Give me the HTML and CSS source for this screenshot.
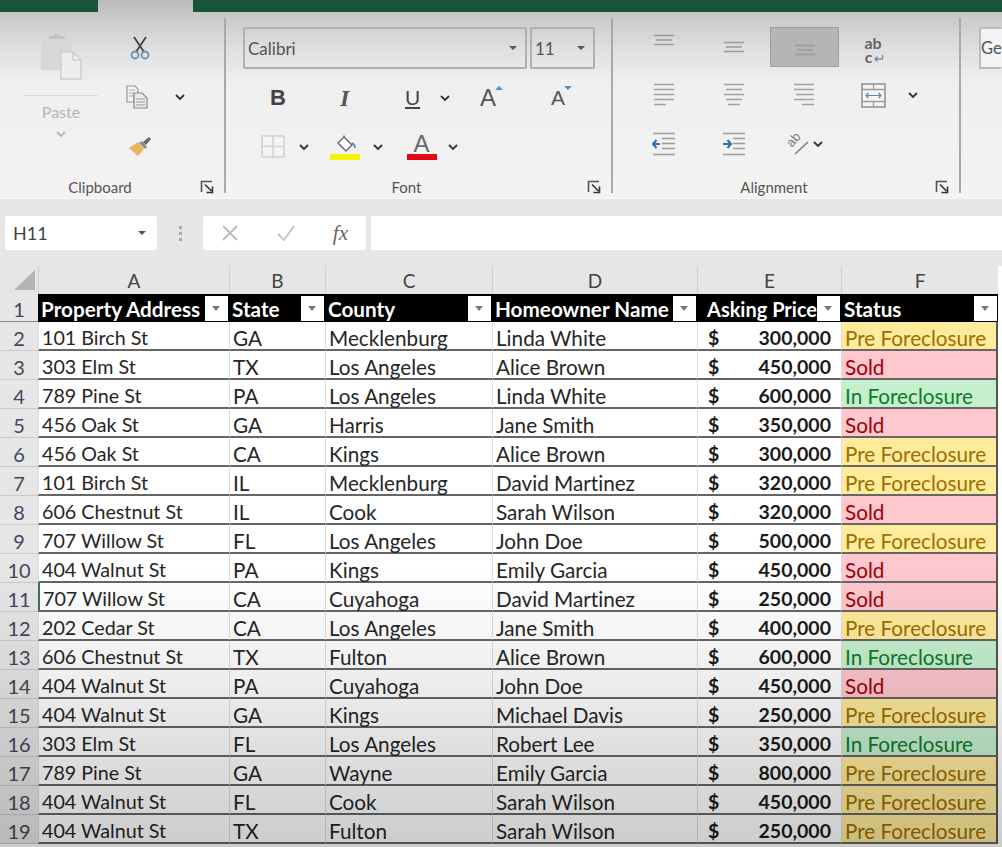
FILE: index.html
```html
<!DOCTYPE html>
<html lang="en">
<head>
<meta charset="utf-8">
<title>Property list</title>
<link rel="stylesheet" href="styles.css">
</head>
<body>
<svg class="defs" width="0" height="0" aria-hidden="true">
  <symbol id="chev" viewBox="0 0 12 8"><path d="M2 2l4 4 4-4" fill="none" stroke="#333" stroke-width="1.8"/></symbol>
  <symbol id="launch" viewBox="0 0 14 14"><path d="M1.5 12V1.5H12" fill="none" stroke="#555" stroke-width="1.6"/><path d="M5 4.5l6.5 6.5M6.500 12.500h6v-6" fill="none" stroke="#333" stroke-width="1.6"/></symbol>
  <symbol id="lines-c" viewBox="0 0 22 12"><path d="M1 1.500h20M3 6h16M1 10.500h20" stroke="#9a9a9a" stroke-width="1.600"/></symbol>
  <symbol id="l-left" viewBox="0 0 22 24"><path d="M1 1.500h20M1 6.500h20M1 11.500h20M1 16.500h20M1 21.500h12" stroke="#a2a2a2" stroke-width="1.600"/></symbol>
  <symbol id="l-center" viewBox="0 0 22 24"><path d="M1 1.500h20M3 6.500h16M1 11.500h20M3 16.500h16M5 21.500h12" stroke="#a2a2a2" stroke-width="1.600"/></symbol>
  <symbol id="l-right" viewBox="0 0 22 24"><path d="M1 1.500h20M1 6.500h20M3 11.500h18M1 16.500h20M9 21.500h12" stroke="#a2a2a2" stroke-width="1.600"/></symbol>
</svg>

<div class="titlebar"><div class="tab-gap"></div></div>

<div class="ribbon">
  <section class="group group-clip">
    <div class="group-body clip-body">
      <div class="paste">
        <svg class="ic-paste" width="42" height="47" viewBox="0 0 42 47"><path d="M1 6h31v31H1z" fill="#d8d6d9"/><path d="M9 6V3h5V1h6v2h5v3z" fill="#c6c4c8"/><path d="M21 19h12l8 8v19H21z" fill="#efedf0" stroke="#d0ced2" stroke-width="1.500"/><path d="M33 19v8h8" fill="none" stroke="#d0ced2" stroke-width="1.500"/></svg>
        <div class="paste-rule"></div>
        <div class="paste-label">Paste</div>
        <svg class="paste-chev" width="12" height="8"><use href="#chev" opacity=".3"/></svg>
      </div>
      <div class="clip-tools">
        <svg width="22" height="24" viewBox="0 0 22 24"><path d="M5 1l10 15M17 1L7 16" stroke="#444" stroke-width="1.800" fill="none"/><circle cx="6" cy="19" r="3.500" fill="none" stroke="#6d8fb0" stroke-width="1.800"/><circle cx="16" cy="19" r="3.500" fill="none" stroke="#6d8fb0" stroke-width="1.800"/></svg>
        <span></span>
        <svg class="ic-copy" width="22" height="24" viewBox="0 0 22 24"><path d="M1 1h8l3 3v5H8v8H1z" fill="#f3f2f3" stroke="#999" stroke-width="1.200"/><path d="M3 5h6M3 8h4M3 11h4" stroke="#aaa"/><path d="M8 8h8l5 5v10H8z" fill="#eceaee" stroke="#888" stroke-width="1.200"/><path d="M10 14h9M10 17h9M10 20h9" stroke="#999"/></svg>
        <svg width="12" height="8"><use href="#chev"/></svg>
        <svg width="24" height="22" viewBox="0 0 24 22"><path d="M1 13l9-6 6 7-6 7z" fill="#e6b660"/><path d="M11 8l6 6 2-2-5-6z" fill="#8b8b8b"/><path d="M15 7l6-5 2 2-5 6z" fill="#666"/></svg>
        <span></span>
      </div>
    </div>
    <div class="group-foot"><span class="group-name">Clipboard</span><svg class="launcher" width="14" height="14"><use href="#launch"/></svg></div>
  </section>

  <section class="group group-font">
    <div class="group-body">
      <div class="combos">
        <div class="combo combo-font"><span>Calibri</span><i class="caret"></i></div>
        <div class="combo combo-size"><span>11</span><i class="caret"></i></div>
      </div>
      <div class="font-row font-row-a">
        <b class="gl gl-b">B</b>
        <i class="gl gl-i">I</i>
        <u class="gl gl-u">U</u>
        <svg width="12" height="8"><use href="#chev"/></svg>
        <span class="gl gl-a gl-up">A</span>
        <span class="gl gl-a gl-down">A</span>
      </div>
      <div class="font-row font-row-b">
        <svg width="24" height="23" viewBox="0 0 24 23"><path d="M1 1h22v21H1zM12 1v21M1 11.500h22" fill="#f5f4f5" stroke="#d2d2d2" stroke-width="1.600"/></svg>
        <svg width="12" height="8"><use href="#chev"/></svg>
        <div class="swatch-ic">
          <svg width="22" height="19" viewBox="0 0 22 19"><path d="M10 3l8 8-6 6-8-8z" fill="#fbfbfb" stroke="#666" stroke-width="1.400"/><path d="M10 3V1.500M18 9c2 1 3 3 3 5" fill="none" stroke="#4d82b8" stroke-width="1.500"/></svg>
          <i class="swatch swatch-yellow"></i>
        </div>
        <svg width="12" height="8"><use href="#chev"/></svg>
        <div class="swatch-ic swatch-a">
          <span class="gl-a-color">A</span>
          <i class="swatch swatch-red"></i>
        </div>
        <svg width="12" height="8"><use href="#chev"/></svg>
      </div>
    </div>
    <div class="group-foot"><span class="group-name">Font</span><svg class="launcher" width="14" height="14"><use href="#launch"/></svg></div>
  </section>

  <section class="group group-align">
    <div class="group-body align-grid">
      <div class="acell acell-top"><svg width="22" height="12"><use href="#lines-c"/></svg></div>
      <div class="acell acell-mid"><svg width="22" height="12"><use href="#lines-c"/></svg></div>
      <div class="acell acell-bottom acell-on"><svg width="22" height="12"><use href="#lines-c"/></svg></div>
      <div class="acell acell-wrap">
        <span class="wrap-ab">ab</span>
        <span class="wrap-c">c<svg width="11" height="8" viewBox="0 0 11 8"><path d="M9.500 0v4H2M4.500 1.500L2 4l2.500 2.500" fill="none" stroke="#6d8fb0" stroke-width="1.300"/></svg></span>
      </div>
      <span></span>
      <div class="acell"><svg width="22" height="24"><use href="#l-left"/></svg></div>
      <div class="acell"><svg width="22" height="24"><use href="#l-center"/></svg></div>
      <div class="acell"><svg width="22" height="24"><use href="#l-right"/></svg></div>
      <div class="acell"><svg width="25" height="25" viewBox="0 0 25 25"><path d="M1 1h23v23H1z" fill="#f6f5f6" stroke="#8f8f8f" stroke-width="1.500"/><path d="M1 6.500h23M1 18.500h23M12.500 1v5.500M12.500 18.500V24" stroke="#9a9a9a" stroke-width="1.300"/><path d="M5 12.500h15M7.500 10l-2.500 2.500 2.500 2.500M17.500 10l2.500 2.500-2.500 2.500" fill="none" stroke="#5a86ad" stroke-width="1.200"/></svg></div>
      <svg width="12" height="8"><use href="#chev"/></svg>
      <div class="acell"><svg width="24" height="24" viewBox="0 0 24 24"><path d="M1 1.500h22M10 6.500h13M10 11.500h13M10 16.500h13M1 22.500h22" stroke="#9c9c9c" stroke-width="1.600"/><path d="M1 12h7M4.500 8L1 12l3.500 4" fill="none" stroke="#2f73b5" stroke-width="2.200"/></svg></div>
      <div class="acell"><svg width="24" height="24" viewBox="0 0 24 24"><path d="M1 1.500h22M11 6.500h12M11 11.500h12M11 16.500h12M1 22.500h22" stroke="#9c9c9c" stroke-width="1.600"/><path d="M1 12h8M5.500 8L9 12l-3.500 4" fill="none" stroke="#2f73b5" stroke-width="2.200"/></svg></div>
      <div class="acell acell-orient">
        <svg class="ic-orient" width="22" height="22" viewBox="0 0 22 22"><path d="M8 21L21 9" stroke="#777" stroke-width="1.400"/><text class="orient-text" x="0" y="0" transform="translate(5 15) rotate(-50)">ab</text></svg>
        <svg width="12" height="8"><use href="#chev"/></svg>
      </div>
    </div>
    <div class="group-foot"><span class="group-name">Alignment</span><svg class="launcher" width="14" height="14"><use href="#launch"/></svg></div>
  </section>

  <section class="group-number">
    <div class="combo combo-number"><span>Ge</span></div>
  </section>
</div>

<div class="formula-bar">
  <div class="name-box"><span>H11</span><i class="caret"></i></div>
  <div class="grip"><i></i><i></i><i></i></div>
  <div class="fx-box">
    <svg width="18" height="18" viewBox="0 0 18 18"><path d="M2 2l14 14M16 2L2 16" stroke="#bbb" stroke-width="1.800"/></svg>
    <svg width="20" height="18" viewBox="0 0 20 18"><path d="M2 10l6 6L18 2" fill="none" stroke="#c6c6c6" stroke-width="2"/></svg>
    <span class="fx">fx</span>
  </div>
  <div class="fx-input"></div>
</div>

<div class="sheet">
<table class="grid">
  <colgroup>
    <col class="c0"><col class="ca"><col class="cb"><col class="cc"><col class="cd"><col class="ce"><col class="cf">
  </colgroup>
  <thead>
    <tr class="col-heads">
      <th class="corner"><i class="corner-mark"></i></th>
      <th>A</th><th>B</th><th>C</th><th>D</th><th>E</th><th>F</th>
    </tr>
  </thead>
  <tbody>
    <tr class="head-row">
      <th class="rn">1</th>
      <td><div class="hd"><span>Property Address</span><i class="flt"></i></div></td>
      <td><div class="hd"><span>State</span><i class="flt"></i></div></td>
      <td><div class="hd"><span>County</span><i class="flt"></i></div></td>
      <td><div class="hd"><span>Homeowner Name</span><i class="flt"></i></div></td>
      <td><div class="hd hd-e"><span>Asking Price</span><i class="flt"></i></div></td>
      <td><div class="hd"><span>Status</span><i class="flt"></i></div></td>
    </tr>
    <tr><th class="rn">2</th><td>101 Birch St</td><td>GA</td><td>Mecklenburg</td><td>Linda White</td><td class="money"><div><span>$</span><span>300,000</span></div></td><td class="pre">Pre Foreclosure</td></tr>
    <tr><th class="rn">3</th><td>303 Elm St</td><td>TX</td><td>Los Angeles</td><td>Alice Brown</td><td class="money"><div><span>$</span><span>450,000</span></div></td><td class="sold">Sold</td></tr>
    <tr><th class="rn">4</th><td>789 Pine St</td><td>PA</td><td>Los Angeles</td><td>Linda White</td><td class="money"><div><span>$</span><span>600,000</span></div></td><td class="inf">In Foreclosure</td></tr>
    <tr><th class="rn">5</th><td>456 Oak St</td><td>GA</td><td>Harris</td><td>Jane Smith</td><td class="money"><div><span>$</span><span>350,000</span></div></td><td class="sold">Sold</td></tr>
    <tr><th class="rn">6</th><td>456 Oak St</td><td>CA</td><td>Kings</td><td>Alice Brown</td><td class="money"><div><span>$</span><span>300,000</span></div></td><td class="pre">Pre Foreclosure</td></tr>
    <tr><th class="rn">7</th><td>101 Birch St</td><td>IL</td><td>Mecklenburg</td><td>David Martinez</td><td class="money"><div><span>$</span><span>320,000</span></div></td><td class="pre">Pre Foreclosure</td></tr>
    <tr><th class="rn">8</th><td>606 Chestnut St</td><td>IL</td><td>Cook</td><td>Sarah Wilson</td><td class="money"><div><span>$</span><span>320,000</span></div></td><td class="sold">Sold</td></tr>
    <tr><th class="rn">9</th><td>707 Willow St</td><td>FL</td><td>Los Angeles</td><td>John Doe</td><td class="money"><div><span>$</span><span>500,000</span></div></td><td class="pre">Pre Foreclosure</td></tr>
    <tr><th class="rn">10</th><td>404 Walnut St</td><td>PA</td><td>Kings</td><td>Emily Garcia</td><td class="money"><div><span>$</span><span>450,000</span></div></td><td class="sold">Sold</td></tr>
    <tr><th class="rn">11</th><td class="marked">707 Willow St</td><td>CA</td><td>Cuyahoga</td><td>David Martinez</td><td class="money"><div><span>$</span><span>250,000</span></div></td><td class="sold">Sold</td></tr>
    <tr><th class="rn">12</th><td>202 Cedar St</td><td>CA</td><td>Los Angeles</td><td>Jane Smith</td><td class="money"><div><span>$</span><span>400,000</span></div></td><td class="pre">Pre Foreclosure</td></tr>
    <tr><th class="rn">13</th><td>606 Chestnut St</td><td>TX</td><td>Fulton</td><td>Alice Brown</td><td class="money"><div><span>$</span><span>600,000</span></div></td><td class="inf">In Foreclosure</td></tr>
    <tr><th class="rn">14</th><td>404 Walnut St</td><td>PA</td><td>Cuyahoga</td><td>John Doe</td><td class="money"><div><span>$</span><span>450,000</span></div></td><td class="sold">Sold</td></tr>
    <tr><th class="rn">15</th><td>404 Walnut St</td><td>GA</td><td>Kings</td><td>Michael Davis</td><td class="money"><div><span>$</span><span>250,000</span></div></td><td class="pre">Pre Foreclosure</td></tr>
    <tr><th class="rn">16</th><td>303 Elm St</td><td>FL</td><td>Los Angeles</td><td>Robert Lee</td><td class="money"><div><span>$</span><span>350,000</span></div></td><td class="inf">In Foreclosure</td></tr>
    <tr><th class="rn">17</th><td>789 Pine St</td><td>GA</td><td>Wayne</td><td>Emily Garcia</td><td class="money"><div><span>$</span><span>800,000</span></div></td><td class="pre">Pre Foreclosure</td></tr>
    <tr><th class="rn">18</th><td>404 Walnut St</td><td>FL</td><td>Cook</td><td>Sarah Wilson</td><td class="money"><div><span>$</span><span>450,000</span></div></td><td class="pre">Pre Foreclosure</td></tr>
    <tr><th class="rn">19</th><td>404 Walnut St</td><td>TX</td><td>Fulton</td><td>Sarah Wilson</td><td class="money"><div><span>$</span><span>250,000</span></div></td><td class="pre">Pre Foreclosure</td></tr>
  </tbody>
</table>
<div class="sheet-shade"></div>
</div>
</body>
</html>
```

FILE: styles.css
```css
* { box-sizing: border-box; }
html, body { margin: 0; height: 847px; overflow: hidden; }
body { position: relative; background: #e6e6e6; font-family: Lato, "Open Sans", sans-serif; color: #333; font-variant-ligatures: none; }
.defs { position: absolute; }
i { display: block; }

.titlebar { height: 12px; background: #17553a; padding-left: 98px; }
.tab-gap { width: 95px; height: 12px; background: linear-gradient(#b9b9b9, #c6c6c6); }

.ribbon { height: 187px; display: flex; padding-top: 6px; background: linear-gradient(#c6c6c6 0, #dcdbdc 30px, #f0eff0 70px, #f4f3f4 100%); border-bottom: 1px solid #f8f8f8; }
.group { flex: none; height: 175px; display: flex; flex-direction: column; border-right: 2px solid #a9a9a9; }
.group-body { flex: 1; min-height: 0; }
.group-foot { flex: none; height: 24px; display: flex; align-items: center; padding-right: 10px; padding-top: 12px; }
.group-name { flex: 1; text-align: center; font-size: 15px; color: #555; }
.group-clip { width: 226px; }
.group-font { width: 387px; }
.group-align { width: 348px; }

.clip-body { display: flex; }
.paste { width: 122px; padding-top: 15px; display: flex; flex-direction: column; align-items: center; }
.paste-rule { width: 74px; height: 1px; background: #dadada; margin-top: 15px; }
.paste-label { font-size: 16px; color: #b4b4b4; margin-top: 6px; line-height: 20px; }
.paste-chev { margin-top: 8px; }
.clip-tools { padding-top: 5px; display: grid; grid-template-columns: 36px 44px; grid-auto-rows: 49px; align-items: center; justify-items: center; align-content: start; }
.ic-copy { margin-right: 6px; }

.combos { display: flex; gap: 3px; padding: 9px 0 0 17px; }
.combo { height: 42px; border: 2px solid #b0b0b0; border-radius: 2px; display: flex; align-items: center; padding: 0 8px 0 3px; font-size: 17px; color: #555; justify-content: space-between; }
.combo-font { width: 284px; }
.combo-size { width: 65px; }
.caret { width: 0; height: 0; border: 4px solid transparent; border-top: 4px solid #555; border-bottom: 0; }

.font-row { display: grid; align-items: center; justify-items: start; height: 49px; }
.font-row-a { grid-template-columns: 70px 65px 34px 41px 71px 20px; padding-left: 44px; margin-top: 4px; }
.font-row-b { grid-template-columns: 37px 32px 42px 34px 41px 12px; padding-left: 35px; }
.gl { font-family: "Liberation Sans", sans-serif; color: #444; line-height: 26px; font-size: 22px; }
.gl-b { font-weight: 700; }
.gl-i { font-family: "Liberation Serif", serif; font-weight: 700; font-size: 24px; color: #555; }
.gl-u { font-size: 21px; }
.gl-a { position: relative; color: #555; }
.gl-up { font-size: 24px; }
.gl-down { font-size: 21px; }
.gl-up::after, .gl-down::after { content: ""; position: absolute; top: 1px; right: -7px; width: 0; height: 0; border: 4px solid transparent; }
.gl-up::after { border-top: 0; border-bottom: 4px solid #5a8db8; }
.gl-down::after { border-bottom: 0; border-top: 4px solid #5a8db8; }
.swatch-ic { width: 30px; display: flex; flex-direction: column; align-items: center; }
.swatch-a { width: 31px; }
.swatch { width: 30px; height: 6px; }
.swatch-yellow { background: #f6f300; margin-top: 1px; }
.swatch-red { background: #e40613; }
.gl-a-color { font-family: "Liberation Sans", sans-serif; font-size: 24px; line-height: 21px; color: #666; }

.align-grid { display: grid; grid-template-columns: 70px 70px 70px 68px 12px; grid-template-rows: 40px 56px 42px; padding: 9px 0 0 16px; align-items: center; justify-items: center; }
.acell { display: flex; align-items: center; justify-content: center; width: 100%; }
.acell-top { align-self: start; padding-top: 7px; }
.acell-mid { align-self: center; }
.acell-bottom { align-self: stretch; align-items: flex-end; padding-bottom: 10px; }
.acell-on { background: #b5b5b7; border: 1px solid #9c9c9e; margin-left: 1px; width: 69px; }
.acell-wrap { flex-direction: column; font-size: 16px; font-weight: 700; color: #666; margin-top: 4px; }
.wrap-ab { display: block; line-height: 14px; height: 14px; }
.wrap-c { display: flex; align-items: flex-end; gap: 1px; padding-left: 3px; line-height: 13px; height: 13px; }
.acell-orient { gap: 3px; padding-left: 2px; }
.ic-orient { overflow: visible; }
.orient-text { font-family: "Liberation Sans", sans-serif; font-size: 13px; fill: #777; }

.group-number { flex: 1; min-width: 0; padding: 9px 0 0 18px; }
.combo-number { width: 100%; background: #f4f3f4; border-color: #bcbcbc; border-right: 0; justify-content: flex-start; padding-left: 0; font-size: 16.500px; }

.formula-bar { height: 67px; display: flex; padding-top: 17px; align-items: flex-start; padding-left: 5px; background: #e6e6e6; }
.name-box { width: 152px; height: 34px; background: #fff; border-radius: 2px; display: flex; align-items: center; justify-content: space-between; padding: 0 11px 0 8px; font-size: 18px; color: #444; }
.grip { width: 46px; height: 34px; display: flex; flex-direction: column; align-items: center; justify-content: center; gap: 3px; }
.grip i { width: 3px; height: 3px; background: #a8a8a8; }
.fx-box { width: 163px; height: 34px; background: #fff; border-radius: 2px; display: flex; align-items: center; justify-content: space-between; padding: 0 18px; }
.fx { font-family: "Liberation Serif", serif; font-style: italic; font-size: 21px; color: #666; }
.fx-input { flex: 1; height: 34px; margin-left: 5px; background: #fff; }

.sheet { position: relative; height: 581px; overflow: hidden; background: #fff; }
.sheet-shade { position: absolute; inset: 0; pointer-events: none; background: linear-gradient(rgba(0,0,0,0) 0, rgba(0,0,0,0) 300px, rgba(0,0,0,.06) 400px, rgba(0,0,0,.2) 581px); }
.grid { width: 998px; table-layout: fixed; border-collapse: separate; border-spacing: 0; font-size: 20.7px; color: #262626; }
.c0 { width: 38px; } .ca { width: 191px; } .cb { width: 96px; } .cc { width: 167px; } .cd { width: 205px; } .ce { width: 144px; } .cf { width: 157px; }
.col-heads th { height: 28px; padding: 0; background: #e6e6e6; font-weight: 400; font-size: 19px; color: #444; border-left: 1px solid #cfcfcf; text-align: center; }
.col-heads .corner { border-left: 0; position: relative; }
.corner-mark { position: absolute; left: 14px; top: 4px; width: 0; height: 0; border-style: solid; border-width: 0 0 20px 21px; border-color: transparent transparent #b4b4b4 transparent; }
.rn { padding: 3px 0 0; width: 38px; height: 29px; background: #e6e6e6; font-weight: 400; font-size: 20px; line-height: 24px; color: #45475a; text-align: center; border-bottom: 1px solid #c9c9c9; }
tbody td { height: 29px; padding: 5px 0 0 3px; border-bottom: 2px solid #666; border-left: 1px solid #dcdcdc; white-space: nowrap; background: #fff; line-height: 22px; }
tbody td:nth-child(2) { font-size: 19.7px; }
.head-row th { height: 28px; border-bottom-color: #888; }
.head-row td { height: 28px; background: #000; color: #fff; font-weight: 700; padding: 0; border: 0; }
.head-row td:nth-child(2) { font-size: 20.7px; }
.hd { display: flex; align-items: center; justify-content: space-between; padding: 2px 1px 0 3px; height: 28px; }
.hd-e { padding-left: 10px; font-size: 20px; }
.flt { flex: none; width: 23px; height: 25px; margin-top: -2px; background: #fff; position: relative; }
.flt::after { content: ""; position: absolute; left: 7px; top: 10px; width: 0; height: 0; border: 4.500px solid transparent; border-top: 5px solid #777; border-bottom: 0; }
.money { font-weight: 700; color: #1a1a1a; font-size: 19.5px; }
.money div { display: flex; justify-content: space-between; padding: 0 10px 0 7px; }
.pre { background: #ffeb9c; color: #9c6f00; }
.sold { background: #ffc7ce; color: #9c0006; }
.inf { background: #c6efce; color: #0f7a2a; }
.marked { border-left: 2px solid #3f6f5c; }
tbody td:last-child { border-right: 2px solid #555; }
.head-row td:last-child { border-right: 0; }
```
